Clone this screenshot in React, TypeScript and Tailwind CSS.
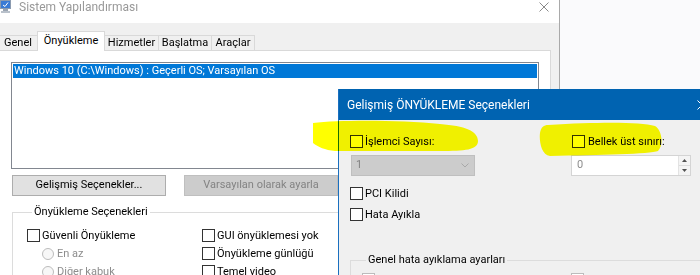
function CheckBox() {
  return <span className="w-[13px] h-[13px] shrink-0 border border-[#333333] bg-white" />
}

function Radio() {
  return <span className="w-[12px] h-[12px] shrink-0 rounded-full border border-[#bcbcbc] bg-[#f7f7f7]" />
}

function CheckRow({ label, className = "" }: { label: string; className?: string }) {
  return (
    <div className={`flex items-center h-[13px] gap-[2px] ${className}`}>
      <CheckBox />
      <span className="leading-[13px]">{label}</span>
    </div>
  )
}

function AppIcon() {
  return (
    <svg width="12" height="13" viewBox="0 0 12 13" className="shrink-0">
      <rect x="0" y="0" width="11" height="9" fill="#8b9bb0" />
      <rect x="1" y="1" width="9" height="7" fill="#3a7bd5" />
      <path d="M3 5 L5 6.5 L8 2.5" stroke="#ffffff" strokeWidth="1" fill="none" />
      <rect x="3" y="9" width="5" height="2" fill="#9aa4b1" />
      <rect x="1" y="11" width="9" height="2" fill="#b9c1cb" />
    </svg>
  )
}

const tabs = [
  { label: "Genel", w: "w-[40px] -ml-[2px]" },
  { label: "Önyükleme", w: "w-[68px]", active: true },
  { label: "Hizmetler", w: "w-[55px]" },
  { label: "Başlatma", w: "w-[54px]" },
  { label: "Araçlar", w: "w-[44px]" },
]

function MainWindow() {
  return (
    <div className="w-[560px] h-full shrink-0 bg-[#f0f0f0] border-r border-[#a9a9a9] flex flex-col">
      {/* title bar */}
      <div className="h-[23px] bg-white flex items-start shrink-0">
        <AppIcon />
        <span className="ml-[7px] text-[#999999] text-[12px] leading-[16px] -mt-[1px]">Sistem Yapılandırması</span>
        <svg width="10" height="10" viewBox="0 0 10 10" className="ml-auto mr-[10px] mt-[2px]">
          <path d="M0.5 0.5 L9.5 9.5 M9.5 0.5 L0.5 9.5" stroke="#8a8a8a" strokeWidth="1" />
        </svg>
      </div>

      {/* tabs */}
      <div className="h-[27px] flex items-end shrink-0">
        {tabs.map((t) =>
          t.active ? (
            <div
              key={t.label}
              className={`${t.w} h-[20px] -mb-px -mr-px relative z-10 bg-white border-t border-l border-r border-[#d9d9d9] flex items-start justify-center pt-[2px] leading-[14px]`}
            >
              {t.label}
            </div>
          ) : (
            <div
              key={t.label}
              className={`${t.w} h-[15px] -mr-px bg-[#f0f0f0] border-t border-l border-r border-[#d9d9d9] flex items-center justify-center leading-[14px]`}
            >
              {t.label}
            </div>
          )
        )}
      </div>

      {/* tab panel */}
      <div className="w-[551px] flex-1 bg-white border-t border-r border-[#d9d9d9] flex flex-col">
        <div className="ml-[11px] mt-[11px] w-[528px] h-[107px] border border-[#828790] pt-[1px] px-[1px]">
          <div className="h-[14px] bg-[#0078d7] text-white leading-[14px] pl-[1px]">
            Windows 10 (C:\Windows) : Geçerli OS; Varsayılan OS
          </div>
        </div>

        <div className="flex mt-[6px] ml-[12px] gap-[18px]">
          <div className="w-[154px] h-[21px] border border-[#adadad] bg-[#e1e1e1] flex items-center justify-center">
            Gelişmiş Seçenekler...
          </div>
          <div className="w-[154px] h-[21px] border border-[#bfbfbf] bg-[#cccccc] text-[#838383] flex items-center justify-center">
            Varsayılan olarak ayarla
          </div>
        </div>

        <fieldset className="mt-[8px] ml-[12px] w-[526px] border border-[#dcdcdc] pl-[14px] pt-[9px] flex-1">
          <legend className="ml-[5px] px-[2px] leading-[16px]">Önyükleme Seçenekleri</legend>
          <div className="grid grid-cols-[175px_1fr] gap-y-[5px]">
            <CheckRow label="Güvenli Önyükleme" />
            <CheckRow label="GUI önyüklemesi yok" />
            <div className="flex items-center h-[13px] pl-[15px] gap-[3px] text-[#8d8d8d]">
              <Radio />
              <span className="leading-[13px]">En az</span>
            </div>
            <CheckRow label="Önyükleme günlüğü" />
            <div className="flex items-center h-[13px] pl-[15px] gap-[3px] text-[#8d8d8d]">
              <Radio />
              <span className="leading-[13px]">Diğer kabuk</span>
            </div>
            <CheckRow label="Temel video" />
          </div>
        </fieldset>
      </div>
    </div>
  )
}

function AdvancedDialog() {
  return (
    <div className="absolute left-[338px] top-[89px] w-[380px] h-[200px] bg-[#f0f0f0] border-l border-[#1a6fbf] flex flex-col">
      <div className="h-[31px] bg-[#0063b1] text-white text-[12px] flex items-center pl-[8px] pr-[11px] shrink-0">
        <span>Gelişmiş ÖNYÜKLEME Seçenekleri</span>
        <svg width="10" height="10" viewBox="0 0 10 10" className="ml-auto">
          <path d="M0.5 0.5 L9.5 9.5 M9.5 0.5 L0.5 9.5" stroke="#ffffff" strokeWidth="1" />
        </svg>
      </div>

      <div className="pl-[11px] pt-[15px] flex flex-col">
        <div className="flex">
          <CheckRow label="İşlemci Sayısı:" className="w-[222px]" />
          <CheckRow label="Bellek üst sınırı:" className="gap-[3px]" />
        </div>

        <div className="flex mt-[7px]">
          <div className="ml-[1px] w-[124px] h-[21px] border border-[#bfbfbf] bg-[#cccccc] text-[#838383] flex items-center pl-[4px] pr-[5px]">
            <span>1</span>
            <svg width="8" height="5" viewBox="0 0 8 5" className="ml-auto">
              <path d="M0.5 0.5 L4 4 L7.5 0.5" stroke="#a8a8a8" strokeWidth="1" fill="none" />
            </svg>
          </div>
          <div className="ml-[96px] w-[120px] h-[21px] border border-[#d4d4d4] bg-white text-[#8d8d8d] flex items-stretch">
            <span className="flex-1 pl-[5px] flex items-center">0</span>
            <div className="w-[12px] flex flex-col border-l border-[#e3e3e3]">
              <div className="flex-1 bg-[#f4f4f4] border-b border-[#dcdcdc] flex items-center justify-center">
                <svg width="5" height="3" viewBox="0 0 5 3">
                  <path d="M0 3 L2.5 0 L5 3 Z" fill="#505050" />
                </svg>
              </div>
              <div className="flex-1 bg-[#f4f4f4] flex items-center justify-center">
                <svg width="5" height="3" viewBox="0 0 5 3">
                  <path d="M0 0 L2.5 3 L5 0 Z" fill="#505050" />
                </svg>
              </div>
            </div>
          </div>
        </div>

        <CheckRow label="PCI Kilidi" className="mt-[11px]" />
        <CheckRow label="Hata Ayıkla" className="mt-[8px]" />

        <fieldset className="mt-[31px] w-[380px] h-[60px] border border-[#dcdcdc] pl-[11px] pt-[5px]">
          <legend className="ml-[4px] px-[2px] leading-[16px]">Genel hata ayıklama ayarları</legend>
          <div className="flex">
            <span className="w-[13px] h-[13px] border border-[#bcbcbc] bg-white" />
            <span className="ml-[196px] w-[13px] h-[13px] border border-[#bcbcbc] bg-white" />
          </div>
        </fieldset>
      </div>
    </div>
  )
}

export default function App() {
  return (
    <div className="relative w-[700px] h-[275px] overflow-hidden flex bg-[#fafafc] text-[11px] text-black font-['Roboto',sans-serif]">
      <MainWindow />
      <AdvancedDialog />
      {/* highlighter strokes */}
      <svg
        width="700"
        height="275"
        viewBox="0 0 700 275"
        className="absolute left-0 top-0 pointer-events-none mix-blend-multiply"
      >
        <path
          d="M313 123 L313 143 C318 147 325 150 335 151 L440 151 C465 151 478 150 478 141 C478 131 465 126 440 124 C400 120 340 120 313 123 Z"
          fill="#ffff00"
        />
        <path
          d="M548 125 C600 122 640 122 655 126 C662 130 664 145 658 151 C650 154 600 155 550 156 C541 155 539 140 540 133 C541 127 544 125 548 125 Z"
          fill="#ffff00"
        />
      </svg>
    </div>
  )
}
